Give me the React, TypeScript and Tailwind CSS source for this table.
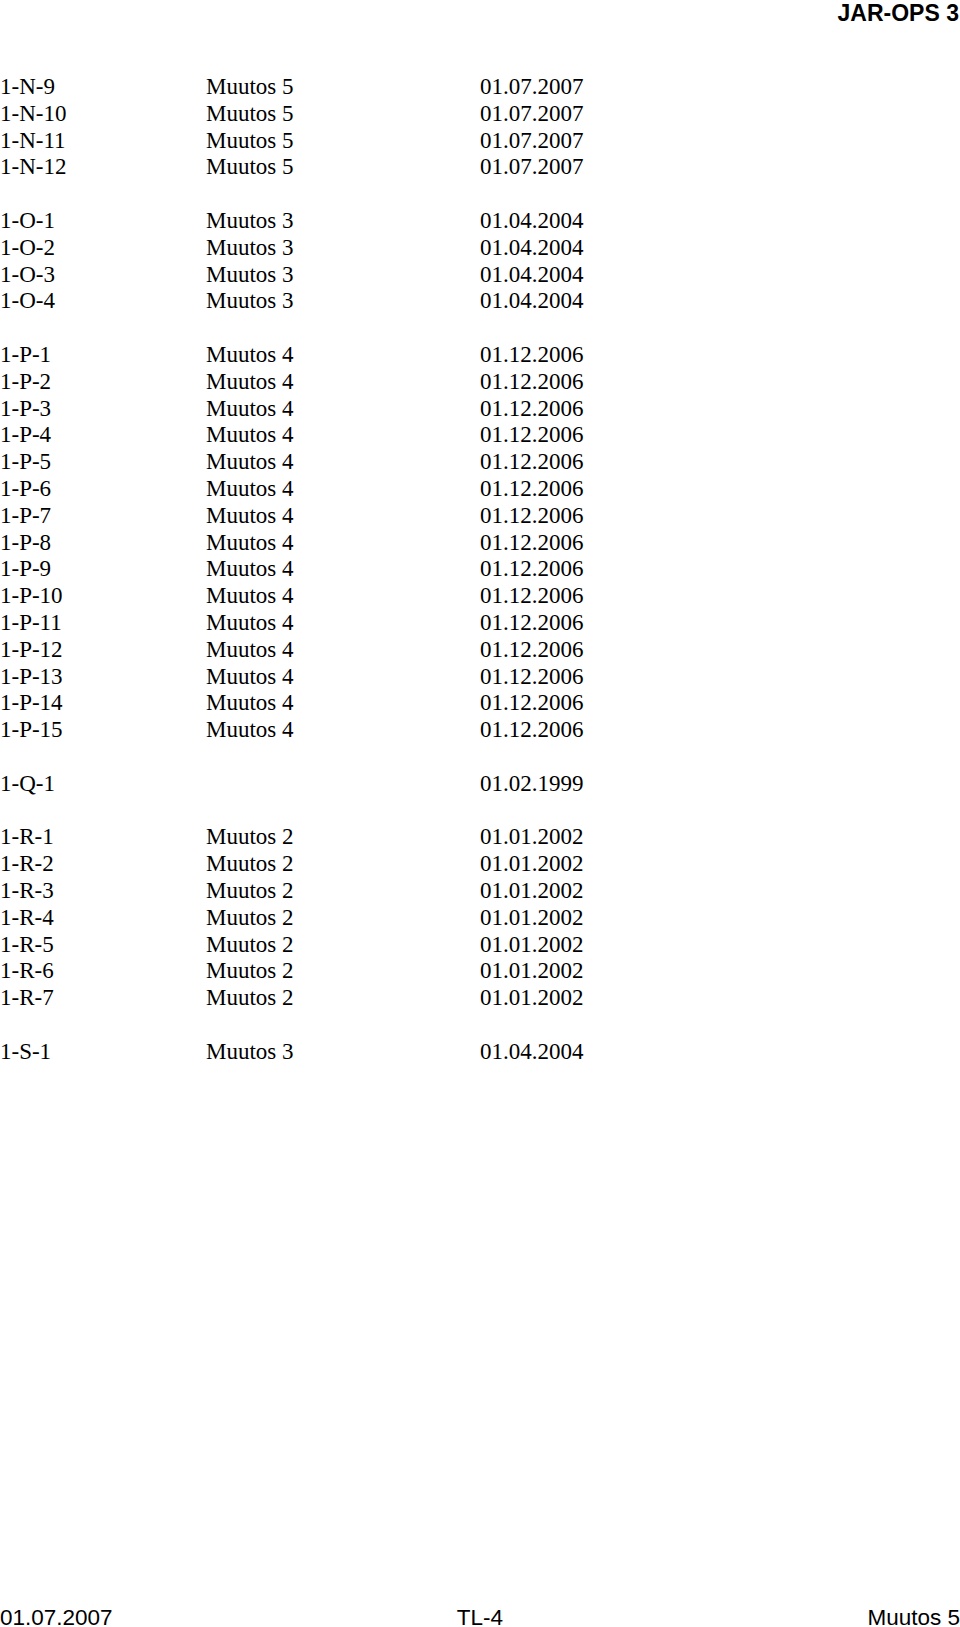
const GROUPS: [string, string, string][][] = [
  [
    ['1-N-9', 'Muutos 5', '01.07.2007'],
    ['1-N-10', 'Muutos 5', '01.07.2007'],
    ['1-N-11', 'Muutos 5', '01.07.2007'],
    ['1-N-12', 'Muutos 5', '01.07.2007'],
  ],
  [
    ['1-O-1', 'Muutos 3', '01.04.2004'],
    ['1-O-2', 'Muutos 3', '01.04.2004'],
    ['1-O-3', 'Muutos 3', '01.04.2004'],
    ['1-O-4', 'Muutos 3', '01.04.2004'],
  ],
  Array.from({ length: 15 }, (_, i) => [`1-P-${i + 1}`, 'Muutos 4', '01.12.2006'] as [string, string, string]),
  [['1-Q-1', '', '01.02.1999']],
  Array.from({ length: 7 }, (_, i) => [`1-R-${i + 1}`, 'Muutos 2', '01.01.2002'] as [string, string, string]),
  [['1-S-1', 'Muutos 3', '01.04.2004']],
];

const Row = ({ cells }: { cells: [string, string, string] }) => (
  <div className="grid grid-cols-[206px_274px_1fr] h-[26.8px] leading-[26.8px] whitespace-nowrap">
    <span>{cells[0]}</span>
    <span>{cells[1]}</span>
    <span>{cells[2]}</span>
  </div>
);

export default function App() {
  return (
    <div className="h-[1631px] bg-white text-black flex flex-col">
      <header
        className="text-right font-bold text-[23px] leading-[26px] pr-px"
        style={{ fontFamily: '"Liberation Sans", Arial, sans-serif' }}
      >
        JAR-OPS 3
      </header>

      <main
        className="mt-[48px] text-[23px]"
        style={{ fontFamily: '"Liberation Serif", "Times New Roman", serif' }}
      >
        {GROUPS.map((group, gi) => (
          <div key={gi}>
            {gi > 0 && <div className="h-[26.8px]" />}
            {group.map(cells => (
              <Row key={cells[0]} cells={cells} />
            ))}
          </div>
        ))}
      </main>

      <div className="flex-1" />

      <footer
        className="grid grid-cols-3 text-[22.5px] leading-[26px]"
        style={{ fontFamily: '"Liberation Sans", Arial, sans-serif' }}
      >
        <span>01.07.2007</span>
        <span className="text-center">TL-4</span>
        <span className="text-right">Muutos 5</span>
      </footer>
    </div>
  );
}
